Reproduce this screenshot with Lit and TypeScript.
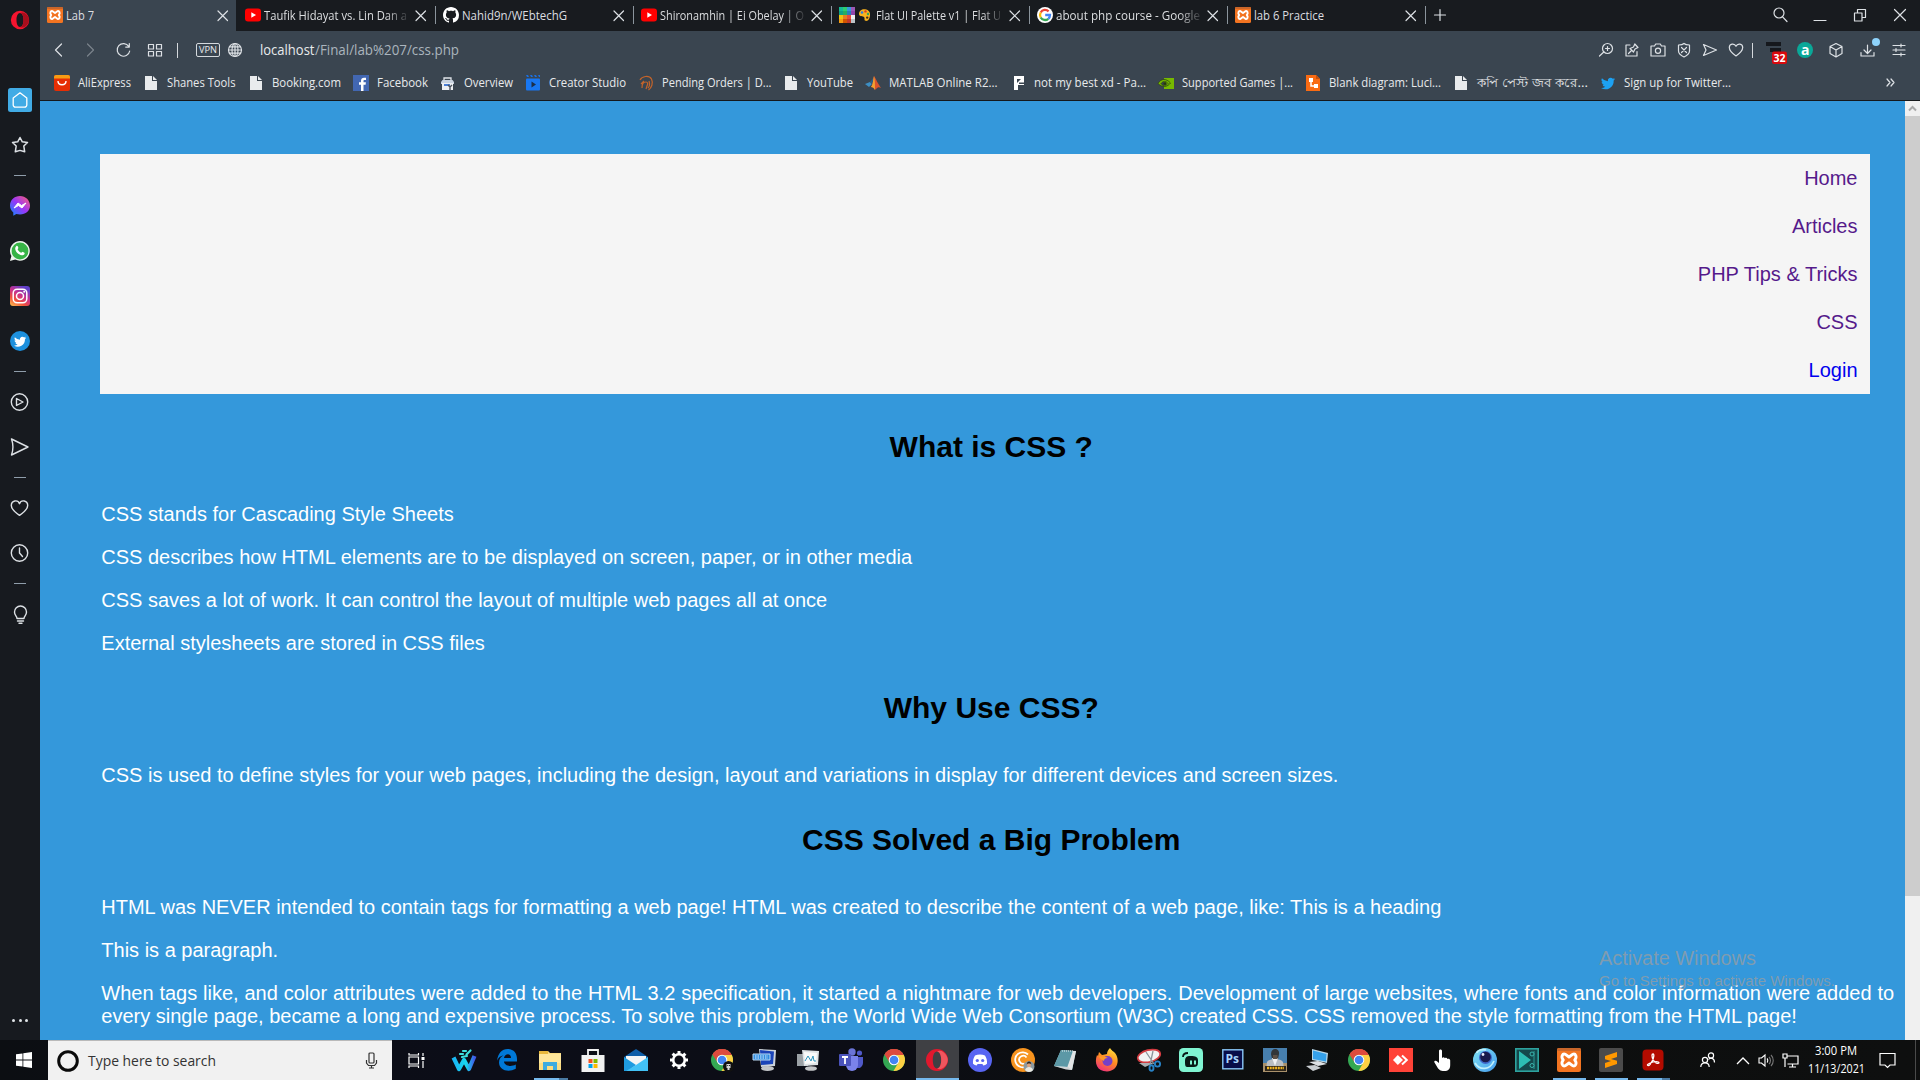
import { LitElement, html, svg, css, nothing } from "lit";
import { customElement } from "lit/decorators.js";

type Art = unknown;

/** A square icon drawn on its own grid. */
const icon = (art: Art, size = 16, grid = size, cls = "") =>
  html`<svg class="ic ${cls}" width=${size} height=${size} viewBox="0 0 ${grid} ${grid}">${art}</svg>`;

/** Single-line interface label set to an exact advance width. */
const label = (text: string, width: number, size = 12, cls = "") =>
  html`<svg class="label ${cls}" width=${width} height=${Math.round(size * 1.5)}>
    <text x="0" y=${Math.round(size * 1.1)} font-size=${size} textLength=${width} lengthAdjust="spacingAndGlyphs">${text}</text>
  </svg>`;

const xampp = svg`<rect width="16" height="16" rx="1.5" fill="#f37421"/><rect width="16" height="2" rx="1" fill="#c9662a"/>
  <path d="M5.600 4.200C3.600 3.400 2.400 6 4.200 8 2.400 10 3.600 12.600 5.600 11.800L8 10l2.400 1.800C12.400 12.600 13.600 10 11.800 8 13.600 6 12.400 3.400 10.400 4.200L8 6z" fill="none" stroke="#fff" stroke-width="1.900" stroke-linejoin="round"/>`;
const youtube = svg`<rect x="0" y="1.500" width="16" height="13" rx="3" fill="#f00"/><path d="M6.300 5.300v5.400L11 8z" fill="#fff"/>`;
const github = svg`<path fill="#fff" d="M8 0C3.580 0 0 3.580 0 8c0 3.540 2.290 6.530 5.470 7.590.4.070.55-.17.55-.38 0-.19-.01-.82-.01-1.490-2.010.37-2.530-.49-2.690-.94-.09-.23-.48-.94-.82-1.130-.28-.15-.68-.52-.01-.53.63-.01 1.080.58 1.230.82.72 1.210 1.870.87 2.330.66.070-.52.28-.87.51-1.070-1.780-.2-3.640-.89-3.640-3.950 0-.87.31-1.590.82-2.150-.08-.2-.36-1.020.080-2.120 0 0 .67-.21 2.200.82.64-.18 1.320-.27 2-.27s1.360.09 2 .27c1.530-1.040 2.200-.82 2.200-.82.44 1.100.16 1.920.080 2.120.51.56.82 1.270.82 2.150 0 3.070-1.870 3.750-3.650 3.950.29.25.54.73.54 1.480 0 1.070-.01 1.930-.01 2.200 0 .21.15.46.55.38A8.010 8.010 0 0 0 16 8c0-4.420-3.580-8-8-8z"/>`;
const paletteColors = ["#16b995", "#2ecc71", "#3498db", "#9b59b6", "#12a085", "#27ae60", "#2980b9", "#8e44ad", "#f1c40f", "#e67e22", "#e74c3c", "#ecf0f1", "#f39c12", "#d35400", "#c0392b", "#bdc3c7"];
const flatPalette = svg`${paletteColors.map((c, i) => svg`<rect x=${(i % 4) * 4} y=${Math.floor(i / 4) * 4} width="4" height="4" fill=${c}/>`)}`;
const paintPalette = svg`<path d="M1 6C1 2.500 4 .8 7 1.200c4 .5 5.400 3.300 5 6.300-.3 3-1.800 6-4.500 5.300-1.800-.5-.4-2.300-1.300-3.500C5 7.700 1 9 1 6z" fill="#f9b21d"/><circle cx="4" cy="4.500" r="1.300" fill="#2f7de0"/><circle cx="7.500" cy="3.400" r="1.200" fill="#d93b2b"/><circle cx="10" cy="6" r="1.200" fill="#3aa655"/><circle cx="9.200" cy="9.600" r="1.200" fill="#3b2a1a"/>`;
const google = svg`<circle cx="8" cy="8" r="8" fill="#fff"/><g fill="none" stroke-width="2.300"><path d="M11.600 4.400A5 5 0 0 0 3.700 5.500" stroke="#ea4335"/><path d="M3.700 5.500a5 5 0 0 0 0 5" stroke="#fbbc05"/><path d="M3.700 10.500a5 5 0 0 0 7.600 1.300" stroke="#34a853"/><path d="M11.300 11.800A5 5 0 0 0 13 8H8.200" stroke="#4285f4"/></g>`;

const doc = svg`<path d="M2 1h7v5h5v9H2z" fill="#e9ebed"/><path d="M10 1l4 4h-4z" fill="#e9ebed"/>`;
const birdPath = "M16 3.500a6 6 0 0 1-1.900.5 3.300 3.300 0 0 0 1.400-1.800 6.500 6.500 0 0 1-2.100.8 3.300 3.300 0 0 0-5.600 3A9.300 9.300 0 0 1 1.100 2.600a3.300 3.300 0 0 0 1 4.400 3.300 3.300 0 0 1-1.500-.4 3.300 3.300 0 0 0 2.600 3.200 3.300 3.300 0 0 1-1.500.1 3.300 3.300 0 0 0 3.100 2.200A6.600 6.600 0 0 1 0 13.500 9.300 9.300 0 0 0 14.400 5.200 6.600 6.600 0 0 0 16 3.500z";

const chrome = svg`<circle cx="12" cy="12" r="11" fill="#34a853"/><path d="M2.500 6.500A11 11 0 0 1 21.500 6.500L12 7z" fill="#dd4b3e"/><path d="M2.500 6.500A11 11 0 0 1 21.800 7H12a5 5 0 0 0-4.400 7.500z" fill="#dd4b3e"/><path d="M21.800 7A11 11 0 0 1 11.500 23l4.900-8.500A5 5 0 0 0 12 7z" fill="#fdd043"/><circle cx="12" cy="12" r="5.300" fill="#fff"/><circle cx="12" cy="12" r="4.300" fill="#4285f4"/>`;
const operaO = (a: string, b: string) => svg`<path fill-rule="evenodd" fill=${a} d="M12 1a11 11 0 1 0 0 22 11 11 0 0 0 0-22zm0 2.600c2.700 0 4.200 3.800 4.200 8.400s-1.500 8.400-4.200 8.400S7.800 16.600 7.800 12 9.300 3.600 12 3.600z"/><path fill=${b} d="M12 3.600c2-1.200 4.500-.9 6.500.6 5.700 4.600 5.700 11 0 15.600-2 1.500-4.500 1.800-6.500.6 2.700 0 4.200-3.800 4.200-8.400S14.700 3.600 12 3.600z"/>`;

const tabs = [
  { art: xampp, text: "Lab 7", width: 28, active: true },
  { art: youtube, text: "Taufik Hidayat vs. Lin Dan a", width: 143, fade: true },
  { art: github, text: "Nahid9n/WEbtechG", width: 105 },
  { art: youtube, text: "Shironamhin | Ei Obelay | O", width: 144, fade: true },
  { art: flatPalette, emoji: true, text: "Flat UI Palette v1 | Flat U", width: 125, fade: true },
  { art: google, text: "about php course - Google", width: 144, fade: true },
  { art: xampp, text: "lab 6 Practice", width: 70 },
];

const bookmarks: [Art, string, number][] = [
  [svg`<rect y="0" width="16" height="16" rx="2" fill="#e62e04"/><path d="M0 3.500V2a2 2 0 0 1 2-2h12a2 2 0 0 1 2 2v1.500z" fill="#f79c14"/><path d="M4 6c0 5 8 5 8 0" stroke="#fff" stroke-width="1.400" fill="none"/>`, "AliExpress", 53],
  [doc, "Shanes Tools", 68.5],
  [doc, "Booking.com", 69],
  [svg`<rect width="16" height="16" fill="#4267b2"/><path d="M8 16V9.800H6V7.300h2V5.700C8 3.700 9.200 2.700 11 2.700h2V5h-1.400c-.9 0-1.100.4-1.100 1v1.300h2.400l-.3 2.500h-2.100V16z" fill="#fff"/>`, "Facebook", 51],
  [svg`<path d="M4 3h7v3H4z" fill="none" stroke="#dfe3e8" stroke-width="1.300"/><path d="M1 7l1.500-2h10L14 7v2H1z" fill="#c9d3e0"/><rect x="2" y="8" width="11" height="7" fill="#eceff3"/><path d="M4 9h6v2H4z" fill="#4b7fd6"/><path d="M8 10l2 2v4m0-4l2-2" stroke="#4a525c" stroke-width="1.400" fill="none"/>`, "Overview", 49],
  [svg`<rect x="1" y="3.500" width="14" height="12" rx="1" fill="#1877f2"/><path d="M1 0h2l1 2H2zm4 0h2l1 2H6zm4 0h2l1 2h-2zm4 0h2v2h-1z" fill="#1b6fe0"/><path d="M6.500 6.500v6l4.500-3z" fill="#1c2f49"/>`, "Creator Studio", 77],
  [svg`<g fill="none" stroke="#c4642a" stroke-width="1.200"><path d="M2 5C4 1 11 0 13.500 4c2 4 0 9-3 11M4 13c0-4 1-6 4-6 2 0 2 2 1 4l-1 3M3 9l3-3M11 6c1 3 1 5-1 7"/></g>`, "Pending Orders | D...", 109.5],
  [doc, "YouTube", 46],
  [svg`<path d="M0 9l5-2 2 2-3 3z" fill="#3d8fc4"/><path d="M5 7l4-5-2 8z" fill="#2a5e86"/><path d="M9 1c2 3 4 8 7 12-3-2-4 0-6 2-1-2-2-3-4-3 2-2 2-7 3-11z" fill="#d9532c"/><path d="M9 1c1 4 1 8 1 14-1-2-2-3-4-3 2-2 2-7 3-11z" fill="#f0a032"/>`, "MATLAB Online R2...", 108.5],
  [svg`<path d="M4 1h10v9H8v5H4z" fill="#fff"/><path d="M7 4h4L7 8z" fill="#3a4550"/><path d="M9 7.500h5v1.500H9z" fill="#3a4550"/>`, "not my best xd - Pa...", 112],
  [svg`<rect x="6" y="3" width="10" height="11" fill="#76b900"/><path d="M0 8.500C3 3.500 8 3 12.500 8c-3 4-8 5-12.500.5zM3 8.500c2 3 5 2.500 7 0-2-3-5-2.500-7 0z" fill="#76b900" stroke="#2d4311" stroke-width=".8"/><circle cx="7" cy="8.500" r="1.500" fill="#26350f"/>`, "Supported Games |...", 111],
  [svg`<path d="M1 0h10l4 4v12H1z" fill="#f96b13"/><path d="M11 0l4 4h-4z" fill="#c9500a"/><path d="M4 3h4v4H4zM9 9h4v4H9z" fill="#fff"/><path d="M6 7v4h4" stroke="#fff" stroke-width="1.500" fill="none"/>`, "Blank diagram: Luci...", 112],
  [doc, "কপি পেস্ট জব করে...", 111],
  [svg`<path d=${birdPath} fill="#1da1f2" transform="translate(1 1) scale(.88)"/>`, "Sign up for Twitter...", 107],
];

const line = (art: Art) => svg`<g fill="none" stroke="#dde1e5" stroke-width="1.200" stroke-linejoin="round" stroke-linecap="round">${art}</g>`;

const navIcons = {
  back: line(svg`<path d="M11.500 2L5.500 8l6 6"/>`),
  forward: line(svg`<path d="M5.500 2l6 6-6 6"/>`),
  reload: line(svg`<path d="M13.800 4.500A6.300 6.300 0 1 0 14.700 9M14.300 1.500v3.600h-3.600"/>`),
  grid: line(svg`<path d="M1.500 2.500h5v4.500h-5zM9.500 2.500h5v4.500h-5zM1.500 9.500h5V14h-5zM9.500 9.500h5V14h-5z"/>`),
  globe: line(svg`<circle cx="8" cy="8" r="6.500"/><ellipse cx="8" cy="8" rx="3" ry="6.500"/><path d="M1.500 8h13M2.500 4.800h11M2.500 11.200h11M8 1.500v13"/>`),
};

const pageActions: Art[] = [
  line(svg`<circle cx="9.500" cy="6.500" r="5"/><path d="M5.800 10L1.500 14M7.500 6.500h4M9.500 4.500v4"/>`),
  line(svg`<path d="M6 3H2v11h11V9.500M4.500 11.500l3-3M6 6.500l3.500 3.500 1.500-3L14 5.500 10.800 2 9.500 5z"/>`),
  line(svg`<path d="M1 4h3.500l1.200-2h4.600l1.200 2H15v10H1z"/><circle cx="8" cy="8.800" r="2.600"/>`),
  line(svg`<path d="M2.500 3C5 3 7 2.500 8 1.500 9 2.500 11 3 13.500 3v6c0 3-2.500 4.500-5.500 6-3-1.500-5.500-3-5.500-6zM5.500 5.500l5 5M10.500 5.500l-5 5"/>`),
  line(svg`<path d="M1.500 2.500L14.500 8l-13 5.500L4 8z"/>`),
  line(svg`<path d="M8 14C3 10.500 1.300 8 1.300 5.500c0-4 5.200-4.600 6.700-1.200 1.500-3.400 6.700-2.800 6.700 1.200C14.700 8 13 10.500 8 14z"/>`),
];

const sideIcons: (Art | null)[] = [
  svg`<rect x="0" y="0" width="24" height="24" rx="2.500" fill="#41abe5"/><path d="M12 4.800l6.800 5.200v7a2.200 2.200 0 0 1-2.200 2.200H7.400A2.200 2.200 0 0 1 5.200 17v-7z" fill="none" stroke="#fff" stroke-width="1.300" stroke-linejoin="round"/>`,
  line(svg`<path d="M12 4.500l2.300 4.300 5.200.7-3.700 3.500.9 5.800-4.700-1.400-4.700 1.400.9-5.800-3.700-3.500 5.200-.7z" stroke-width="1.500"/>`),
  null,
  svg`<defs><linearGradient id="msg" x1="0" y1="1" x2="1" y2="0"><stop offset="0" stop-color="#0a8cff"/><stop offset=".5" stop-color="#9a35f8"/><stop offset="1" stop-color="#ff6370"/></linearGradient></defs><path d="M12 2C6.300 2 2 6 2 11.600c0 2.800 1.200 5.300 3.300 7v3.100l3-1.600c1.200.3 2.400.5 3.700.5 5.700 0 10-3.800 10-9S17.700 2 12 2z" fill="url(#msg)"/><path d="M6 14l4-5 3.500 2.500L18 9l-4 5-3.500-2.500z" fill="#fff" stroke="#fff"/>`,
  svg`<path d="M2 22l1.400-5A9.900 9.900 0 1 1 7.200 20.600z" fill="#eef5ee"/><circle cx="12" cy="12" r="8.400" fill="#37b446"/><path d="M8.200 7.200c1-.8 1.600-.2 2.200 1.700l-.8 1.300c.9 1.800 2 2.800 3.700 3.500l1.200-1c1.900.8 2.500 1.200 2 2.200-1.500 2.200-4.200 1.500-6.300-.1C7.800 13 6 9 8.200 7.200z" fill="#fff"/>`,
  svg`<defs><linearGradient id="ig" x1="0" y1="1" x2=".6" y2="0"><stop offset="0" stop-color="#fdc54f"/><stop offset=".35" stop-color="#f0503c"/><stop offset=".65" stop-color="#c8308f"/><stop offset="1" stop-color="#6040c8"/></linearGradient></defs><rect x="2" y="2" width="20" height="20" rx="3" fill="url(#ig)"/><g fill="none" stroke="#fff" stroke-width="1.500"><rect x="5.200" y="5.200" width="13.600" height="13.600" rx="4"/><circle cx="12" cy="12" r="3.500"/></g><circle cx="16.200" cy="7.800" r="1" fill="#fff"/>`,
  svg`<circle cx="12" cy="12" r="10" fill="#1d90dd"/><path transform="translate(6 6.200) scale(.76)" d=${birdPath} fill="#fff"/>`,
  null,
  line(svg`<g transform="translate(-.5 0)"><circle cx="12" cy="12" r="8.200" stroke-width="1.400"/><path d="M9 8.500l6.500 3.500L9 15.500z" stroke-width="1.400"/></g>`),
  line(svg`<path d="M3.500 4L20 12 3.500 20c1.800-5 1.800-11 0-16z" stroke-width="1.400"/>`),
  null,
  line(svg`<path d="M11.500 19.300C6 15.500 3.300 12.800 3.300 9.600c0-5.200 6.500-6.400 8.200-1.900 1.700-4.500 8.200-3.300 8.200 1.900 0 3.200-2.700 5.900-8.200 9.700z" stroke-width="1.400"/>`),
  line(svg`<g transform="translate(-.5 0)"><circle cx="12" cy="12" r="8.200" stroke-width="1.400"/><path d="M12 7v5l3 3.500" stroke-width="1.400"/></g>`),
  null,
  line(svg`<path d="M9 16.500c0-2.500-2.500-3-2.500-6.500a6 6 0 0 1 12 0c0 3.500-2.500 4-2.500 6.500zM9.500 19h6M11 21.300h3" stroke-width="1.400"/>`),
];

/** Taskbar pins: artwork, and how the pin's window state is shown. */
const pins: { art: Art; state?: string }[] = [
  { art: svg`<defs><linearGradient id="ww"><stop offset="0" stop-color="#18b6f5"/><stop offset=".6" stop-color="#19d8f0"/><stop offset="1" stop-color="#3f5be8"/></linearGradient></defs><path d="M1.500 9.500l5.500 11.500 5-9 5 9 5.500-13" fill="none" stroke="url(#ww)" stroke-width="4.200" stroke-linejoin="round"/><path d="M8 6l3 0M11 3l3 0M14.500 6.500l4-4M10 9l5-1" stroke="#3ee0dd" stroke-width="2.200" stroke-linecap="round"/>` },
  { art: svg`<path d="M2 13C3 5 7 1 12.500 1 19 1 22 5.500 22 11v2.500H9c.2 4 6.500 6 11.800 3v4.300C13 25 4 22 4 14.500c0-3.500 2-6 4.500-7C4.500 8 3 10.500 2 13zM9 10h7c0-5.500-6.500-4.500-7 0z" fill="#0078d7"/>` },
  { state: "split", art: svg`<path d="M1 3h9l2 2h11v17H1z" fill="#fbdc82"/><path d="M1 3h9v3H1z" fill="#e9b83c"/><path d="M1 6h22v9H1z" fill="#ffe69a"/><path d="M5 22v-8h14v8h-4v-4H9v4z" fill="#3cabe0"/>` },
  { art: svg`<path d="M7 8V2h10v6" fill="none" stroke="#f2f2f2" stroke-width="1.800"/><path d="M.5 7h23v17H.5z" fill="#f2f2f2"/><path d="M7.500 11h4v4h-4z" fill="#f25022"/><path d="M12.500 11h4v4h-4z" fill="#7fba00"/><path d="M7.500 16h4v4h-4z" fill="#00a4ef"/><path d="M12.500 16h4v4h-4z" fill="#ffb900"/>` },
  { art: svg`<path d="M0 9l12-8 12 8v14H0z" fill="#0f5ea8"/><path d="M2 8h20v12H2z" fill="#f5f5f5"/><path d="M0 9l12 8-8 6H0z" fill="#1f9be0"/><path d="M24 9v14H2l10-6z" fill="#42c1f5"/>` },
  { art: svg`<circle cx="12" cy="12" r="5.800" fill="none" stroke="#fff" stroke-width="2.600"/><g stroke="#fff" stroke-width="3">${[0, 45, 90, 135, 180, 225, 270, 315].map((a) => svg`<path d="M12 3v3" transform="rotate(${a} 12 12)"/>`)}</g>` },
  { art: svg`${chrome}<circle cx="18.500" cy="18.500" r="5.500" fill="#111"/><path d="M16.500 16h4v4h-1v2h-2v-2h-1z" fill="#d8d8d8"/><path d="M17.300 17.500h.9M19 17.500h.9" stroke="#111"/>` },
  { art: svg`<path d="M6 1l17 1-1 16-14 1z" fill="#cdd3da"/><path d="M7 2l14 1.500-1 12.500-12 1z" fill="#1b44b8"/><path d="M0 6h17v6H0z" fill="#2f8ce0" stroke="#bcd9f3"/><path d="M2 8h13M2 10h13" stroke="#e5f2ff" stroke-dasharray="1.500 1"/><ellipse cx="14.500" cy="20.500" rx="6.500" ry="2.500" fill="#c3c5c8"/>` },
  { art: svg`<path d="M1 6h11v12H1z" fill="#9ba1a6"/><path d="M6 2l17 1-1 14-14 1z" fill="#dfe3e6"/><path d="M8 4l13 1-1 10-11 1z" fill="#fafafa"/><path d="M9 13l3-5 3 5 2-5 1 5h2" fill="none" stroke="#2c94bd"/><ellipse cx="15" cy="20.500" rx="6" ry="2.300" fill="#c3c5c8"/>` },
  { art: svg`<circle cx="13" cy="4" r="3.700" fill="#6b74d6"/><circle cx="20.500" cy="5" r="2.600" fill="#5059c9"/><path d="M16 9h8v6a5 5 0 0 1-6 5z" fill="#5059c9"/><path d="M7 8h12v9a6 6 0 0 1-12 0z" fill="#7b83eb"/><rect x="0" y="6" width="12" height="12" rx="1" fill="#4b53bc"/><path d="M3 9h6M6 9v7" stroke="#fff" stroke-width="1.800"/>` },
  { art: chrome },
  { art: operaO("#e0182d", "#f0565e"), state: "active" },
  { art: svg`<circle cx="12" cy="12" r="12" fill="#5865f2"/><path d="M7 7.500c3-1.300 7-1.300 10 0 1.500 2.500 2.300 5 2 8.300-1.200 1-2.400 1.500-3.700 1.700l-.9-1.500H9.600l-.9 1.500C7.400 17.300 6.200 16.800 5 15.800c-.3-3.300.5-5.800 2-8.300z" fill="#fff"/><circle cx="9.300" cy="12.500" r="1.600" fill="#5865f2"/><circle cx="14.700" cy="12.500" r="1.600" fill="#5865f2"/>` },
  { art: svg`<circle cx="12" cy="12" r="12" fill="#f7931e"/><path d="M17 6.500A7.500 7.500 0 1 0 15 18.500M15.500 9.500a4 4 0 1 0-2 6" fill="none" stroke="#fff" stroke-width="1.800"/><circle cx="18" cy="18.500" r="5.500" fill="#8d9aa0"/><circle cx="18" cy="17" r="2.200" fill="#d6a383"/><path d="M15.800 16.500c0-4 4.500-4 4.500 0l-1-1h-2.500z" fill="#2b211b"/><path d="M14 22c1-4 7-4 8 0-2 2.500-6 2.500-8 0z" fill="#e9e9e2"/>` },
  { art: svg`<path d="M8 2l15 1-4 19L1 18z" fill="#9ed0d8"/><path d="M8 2l12 1-5 16L1 18z" fill="#5c98a6"/><path d="M20 3l3 0-4 19-5-2z" fill="#e2e4e5"/><path d="M1 18l14 1 4 3-6-.5z" fill="#cfd2d4"/><path d="M9 3h12" stroke="#e9f2f3" stroke-dasharray="1 1"/>` },
  { art: svg`<defs><linearGradient id="fx" x1=".8" y1="0" x2=".3" y2="1"><stop offset="0" stop-color="#ffe13c"/><stop offset=".5" stop-color="#ff8a22"/><stop offset="1" stop-color="#f0317b"/></linearGradient></defs><path d="M15 0c2 3 3 3 5 5 5 6 3.500 18-8 18.500C2 23.500-1 15 2 7l1 1 1-4 3 3c2-.5 4-.5 5-1 0-2 1-4 3-6z" fill="url(#fx)"/><circle cx="12.500" cy="13" r="5" fill="#7540c8"/><path d="M4 8c4 1 6 0 9 2-3 0-4 1-4 3-2-1-5-3-5-5z" fill="#ff9a28"/>` },
  { art: svg`<ellipse cx="12" cy="8" rx="11.500" ry="6" transform="rotate(-14 12 8)" fill="#f2f3f3" stroke="#d23b40" stroke-width="1.700"/><path d="M2 15l15 0-9 4z" fill="#a9adb1"/><path d="M9 4l8 12M16 3l-3 14" stroke="#8b959c" stroke-width="1.300"/><g fill="none" stroke="#2882c6" stroke-width="1.900"><circle cx="20.500" cy="16" r="2.600"/><ellipse cx="14.500" cy="20" rx="2" ry="2.800"/></g>` },
  { art: svg`<rect width="24" height="24" rx="4.500" fill="#80f5d2"/><path d="M4 9c0-3 2-4 5-4" fill="none" stroke="#091a17" stroke-width="1.800"/><path d="M6 13c0-4 2-5 5-5s8 0 8 4v3c0 3-2 4-4 4H8c-2 0-2-3-2-6z" fill="#091a17"/><path d="M12 12.500v4M16 12.500v4" stroke="#80f5d2" stroke-width="2"/>` },
  { art: svg`<rect x="1.800" y="1.800" width="20" height="19" fill="#080d49" stroke="#8bc7f8" stroke-width="1.400"/><text x="4.500" y="15" class="ps">Ps</text>` },
  { art: svg`<rect width="24" height="24" fill="#477fae"/><path d="M0 15h24v9H0z" fill="#a9916b"/><path d="M8 6c0-7 9-6 8 0l-1 5H9z" fill="#31363a"/><path d="M4 14c2-4 14-4 16 0l1 7H3z" fill="#b9bec2"/><path d="M9 10l3 8 3-8z" fill="#f0f1f2"/><path d="M10 7h4.500v4H10z" fill="#5c5046"/><path d="M2 18h21v5H2z" fill="#2b251b"/><path d="M4 20h17" stroke="#f1b41f" stroke-width="2.500" stroke-dasharray="2 .7"/>` },
  { art: svg`<path d="M7 1l16 4-1 10L7 12z" fill="#b9d7e7"/><path d="M8 2.500l13.500 3.500L21 13.500 8 11z" fill="#35a2ec"/><path d="M4 14l9-1 9 3-9 2z" fill="#dde1e4"/><path d="M1 18l9-1 6 3-8 3z" fill="#c9ced2"/>` },
  { art: chrome },
  { art: svg`<rect width="24" height="24" fill="#ff4338"/><path d="M8.800 7l5.200 5-5.200 5L4 12z" fill="#fff"/><path d="M13 7.500l4.800 4.500L13 16.500" fill="none" stroke="#fff" stroke-width="2"/>` },
  { art: svg`<path d="M8 3c0-2 3-2 3 0v7c1-1 2.500-.8 2.800.3 1-.8 2.300-.5 2.600.6 1.300-.6 2.600 0 2.800 1.300V17c0 4-2 6-6 6-4 0-5.500-1.500-7-4l-3-5c0-1.500 2-1.800 3-.6L8 15z" fill="#fff"/>` },
  { art: svg`<defs><linearGradient id="gl" x1="0" y1="0" x2="1" y2="1"><stop offset="0" stop-color="#7fe2f3"/><stop offset="1" stop-color="#459bec"/></linearGradient></defs><circle cx="12" cy="12" r="12" fill="url(#gl)"/><path d="M2 15c5 8 15 7 19-2M4 5c0-3 6-4 9-3" fill="none" stroke="#bff0fb" stroke-width="1.800"/><circle cx="12.500" cy="9.500" r="6.500" fill="#3e67c8"/><circle cx="12.500" cy="9" r="5.300" fill="#191a4b"/><circle cx="10" cy="6.500" r="1.400" fill="#e9edfb"/>` },
  { art: svg`<rect x=".8" y=".8" width="22.400" height="22.400" fill="#14494c" stroke="#2da39f" stroke-width="1.600"/><path d="M4 3v18l12-9z" fill="#2dbdb3"/><path d="M19 3v18" stroke="#227f7e" stroke-width="1.500"/><g fill="#14494c" stroke="#3bb5ae"><circle cx="17" cy="6" r="2"/><circle cx="17" cy="17.500" r="2"/></g>` },
  { art: svg`<g transform="scale(1.500)">${xampp}</g>`, state: "open" },
  { art: svg`<rect width="24" height="24" rx="2" fill="#4b4b4b"/><path d="M6 8l12-4v5l-6 2 6 1.800V16L6 20v-5l6-2-6-1.800z" fill="#ff9800"/>`, state: "open" },
  { art: svg`<rect x="1.500" y="1.500" width="21" height="21" rx="4" fill="#b30b00"/><path d="M12 6c1.500 0 .8 4-.8 7-1.200 2.500-3 5-4.400 4.500-1.800-1 4-3.800 8.500-3.800 3.800 0 3 2 .7 1.700-2.500-.4-5.200-5.200-5-8.200 0-.8.500-1.200 1-1.200z" fill="none" stroke="#fff" stroke-width="1.300"/>`, state: "split" },
];

const topics = [
  {
    title: "What is CSS ?",
    lines: [
      "CSS stands for Cascading Style Sheets",
      "CSS describes how HTML elements are to be displayed on screen, paper, or in other media",
      "CSS saves a lot of work. It can control the layout of multiple web pages all at once",
      "External stylesheets are stored in CSS files",
    ],
  },
  {
    title: "Why Use CSS?",
    lines: ["CSS is used to define styles for your web pages, including the design, layout and variations in display for different devices and screen sizes."],
  },
  {
    title: "CSS Solved a Big Problem",
    lines: [
      "HTML was NEVER intended to contain tags for formatting a web page! HTML was created to describe the content of a web page, like: This is a heading",
      "This is a paragraph.",
      html`<span class="airy">When tags like, and color attributes were added to the HTML 3.2 specification, it started a nightmare for web developers. Development of large websites, where fonts and color information were added to</span><br />every single page, became a long and expensive process. To solve this problem, the World Wide Web Consortium (W3C) created CSS. CSS removed the style formatting from the HTML page!`,
    ],
  },
];

@customElement("app-root")
export class AppRoot extends LitElement {
  static styles = css`
    :host { display: block; width: 1920px; height: 1080px; overflow: hidden; font-family: "Open Sans", "Noto Sans", sans-serif; }
    * { box-sizing: border-box; }
    .ic { display: block; flex: none; overflow: visible; }
    .label { display: block; flex: none; overflow: visible; fill: #e8eaec; }
    .desktop { display: grid; grid-template: 1040px 40px / 40px 1880px; height: 1080px; }

    .side { background: #171a1f; display: flex; flex-direction: column; align-items: center; padding-bottom: 8px; }
    .logo { height: 77.5px; padding-top: 10px; }
    .slot { height: 45px; display: flex; align-items: center; }
    .rule { height: 16px; display: flex; align-items: center; }
    .rule::before { content: ""; width: 12px; height: 1px; background: #8f9daa; }
    .more { margin-top: auto; height: 24px; display: flex; align-items: center; gap: 3.500px; }
    .more i { width: 3px; height: 3px; border-radius: 50%; background: #e1e5e8; }

    .win { display: grid; grid-template-rows: 31px 38px 32px 939px; min-width: 0; }
    .tabs { background: #181b1f; display: flex; }
    .tab { width: 198px; display: flex; align-items: center; padding: 0 7px 1px 7px; gap: 3px; border-right: 1px solid #83898f; border-image: linear-gradient(transparent 7px, #8b949c 7px 23px, transparent 23px) 1; }
    .tab.active { width: 196px; margin-right: 2px; background: #3a4550; border: 0; padding-right: 6px; }
    .tab .x { margin-left: auto; }
    .tab .label { fill: #dcdee0; margin-top: 1px; }
    .tab.fade .label { -webkit-mask-image: linear-gradient(90deg, #000 85%, rgba(0,0,0,.15)); mask-image: linear-gradient(90deg, #000 85%, rgba(0,0,0,.15)); }
    .plus { display: flex; align-items: center; padding: 0 0 2px 5.500px; }
    .winctl { margin-left: auto; display: flex; align-items: center; gap: 24px; padding: 0 12px 1px 0; }

    .addr { background: #3a4550; display: flex; align-items: center; padding-left: 10px; }
    .addr .nav { display: flex; gap: 16.400px; }
    .dim { opacity: .4; }
    .vr { width: 1px; height: 15px; background: #d5d9dd; }
    .addr .nav + .vr { margin-left: 14px; }
    .vpn { margin: 0 7px 0 18px; width: 24px; height: 14px; border: 1px solid #d5d9dd; border-radius: 2px; display: flex; align-items: center; justify-content: center; }
    .url { display: flex; margin-left: 17px; }
    .url .path { fill: #abb5be; }
    .acts { margin-left: auto; display: flex; gap: 10px; }
    .acts + .vr { margin: 0 13px 0 8px; }
    .exts { display: flex; align-items: center; gap: 15px; padding-right: 13.500px; }
    .badge-ext { margin-right: -6.500px; }
    .exttext { font: bold 10px "Open Sans", sans-serif; fill: #fff; }
    .exta { font: bold 14px "Open Sans", sans-serif; fill: #fff; }

    .marks { background: #3a4550; border-bottom: 1px solid #15181b; display: flex; align-items: center; gap: 12px; padding: 0 25px 4px 14px; }
    .mark { display: flex; align-items: center; gap: 8px; }
    .marks > .chev { margin-left: auto; }

    .view { background: #3498db; display: grid; grid-template-columns: 1865px 15px; position: relative; overflow: hidden; font-family: "Liberation Sans", Arial, sans-serif; font-size: 20px; line-height: 23px; }
    .page { padding: 53px 0 0 60px; min-width: 0; }
    .menu { margin: 0 0 36px; padding: 0; list-style: none; width: 1770px; background: #f5f5f5; }
    .menu li { height: 48px; display: flex; align-items: center; justify-content: flex-end; padding-right: 12.500px; color: #551a8b; }
    .menu li:last-child { color: #0000ee; }
    h2 { width: 1782.500px; margin: 0 0 39px; text-align: center; font-size: 30px; line-height: 34px; color: #000; }
    p { margin: 0 0 20px 1.300px; color: #fff; white-space: nowrap; }
    .airy { word-spacing: .3px; }
    .topic { margin-bottom: 36px; }
    .topic p:last-child { margin-bottom: 0; }
    .bar { background: #f0f0f0; display: flex; flex-direction: column; justify-content: space-between; }
    .thumb { height: 779.500px; background: #cdcdcd; margin-bottom: auto; }
    .wm { position: absolute; left: 1559px; top: 842px; display: flex; flex-direction: column; }
    .wm .label { fill: rgba(158, 158, 158, .72); }
    .wm .label + .label { margin-top: -4px; }

    .task { grid-column: 1 / 3; background: linear-gradient(90deg, #0c0e12, #0c0d18 25%, #0c0d15 45%, #0c0e0e 60%, #0e0f0f); display: flex; align-items: center; }
    .start { width: 48px; display: flex; justify-content: center; }
    .find { width: 344px; height: 40px; background: #f1f1f1; border-top: 1px solid #b9b9b9; display: flex; align-items: center; padding: 0 12px 0 8px; gap: 8px; }
    .find .label { fill: #333; }
    .find .mic { margin-left: auto; }
    .view-btn { width: 50.500px; padding-left: 15.500px; }
    .pin { width: 43px; height: 40px; flex: none; display: flex; justify-content: center; align-items: center; position: relative; }
    .pin.narrow { width: 42px; }
    .pin.active { background: #3f4044; }
    .pin.active::after, .pin.open::after, .pin.split::after { content: ""; position: absolute; bottom: 0; height: 2px; left: 5px; right: 4px; background: #76b9ed; }
    .pin.active::after { left: 0; right: 0; }
    .pin.split::after { background: linear-gradient(90deg, #76b9ed 25px, #4a7aa3 25px); }
    .ps { font: bold 12px "Open Sans", sans-serif; fill: #a6d4fb; }
    .tray { display: flex; align-items: center; margin-left: auto; }
    .clock { display: flex; flex-direction: column; align-items: center; width: 58px; margin: 0 14px 0 8px; }
    .tray .label { fill: #fff; }
    .edge { width: 1px; height: 40px; background: #4a4a4a; margin: 0 4px 0 19px; }
    .people { margin-right: 20px; }
    .up { margin-right: 9px; }
    .sound { margin-right: 7.500px; }
  `;

  private tabBar() {
    const cross = line(svg`<path d="M3 3l9.500 9.500M12.500 3L3 12.500"/>`);
    return html`<div class="tabs">
      ${tabs.map(
        (t) => html`<div class="tab ${t.active ? "active" : ""} ${t.fade ? "fade" : ""}">
          ${icon(t.art)} ${t.emoji ? icon(paintPalette, 15) : nothing} ${label(t.text, t.width)}
          ${icon(cross, 15, 15, "x")}
        </div>`
      )}
      <div class="plus">${icon(line(svg`<path d="M8 2.500v11M2.500 8h11"/>`))}</div>
      <div class="winctl">
        ${icon(line(svg`<circle cx="7" cy="6" r="5"/><path d="M10.600 9.800L15 14.500"/>`))}
        ${icon(line(svg`<path d="M2 13.500h12"/>`))}
        ${icon(line(svg`<path d="M2.500 6h7.500v8H2.500zM5.500 6V2.500h8v8H10"/>`))}
        ${icon(line(svg`<path d="M2.500 2.500l11 11M13.500 2.500l-11 11"/>`))}
      </div>
    </div>`;
  }

  private addressBar() {
    return html`<div class="addr">
      <div class="nav">
        ${icon(navIcons.back)} ${icon(navIcons.forward, 16, 16, "dim")} ${icon(navIcons.reload)} ${icon(navIcons.grid)}
      </div>
      <span class="vr"></span>
      <span class="vpn">${label("VPN", 18, 9)}</span>
      ${icon(navIcons.globe)}
      <div class="url">${label("localhost", 54.5, 14)}${label("/Final/lab%207/css.php", 144, 14, "path")}</div>
      <div class="acts">${pageActions.map((a) => icon(a))}</div>
      <span class="vr"></span>
      <div class="exts">
        <svg class="ic badge-ext" width="22" height="26" viewBox="0 0 22 26">
          <path d="M0 5h15v4H0zM4 11h11v4H4z" fill="#15181d" />
          <rect x="6" y="14.500" width="15" height="12.500" rx="2" fill="#d9090d" />
          <text x="7.500" y="24.500" class="exttext" textLength="12" lengthAdjust="spacingAndGlyphs">32</text>
        </svg>
        ${icon(svg`<circle cx="8" cy="8" r="8" fill="#0aa898"/><text x="4" y="12.700" class="exta">a</text>`)}
        ${icon(line(svg`<path d="M8 1.500l6 3v7l-6 3.500-6-3.500v-7zM2 4.500L8 8l6-3.500M8 8v7"/>`))}
        ${icon(svg`${line(svg`<path d="M8.500 3v8M5 8l3.500 3.500L12 8M2 10.500V14h13v-3.500"/>`)}<circle cx="17" cy="0" r="4" fill="#8ed3fb"/>`, 17)}
        ${icon(line(svg`<path d="M2 3.500h12M2 8h12M2 12.500h12M10 2v3M5 6.500v3M10 11v3"/>`))}
      </div>
    </div>`;
  }

  render() {
    return html`<div class="desktop">
      <div class="side">
        <div class="logo">${icon(operaO("#f5142f", "#a70e1c"), 20, 24)}</div>
        ${sideIcons.map((a) => (a ? html`<div class="slot">${icon(a, 24)}</div>` : html`<div class="rule"></div>`))}
        <div class="more"><i></i><i></i><i></i></div>
      </div>

      <div class="win">
        ${this.tabBar()} ${this.addressBar()}
        <div class="marks">
          ${bookmarks.map(([art, text, w]) => html`<div class="mark">${icon(art)}${label(text, w)}</div>`)}
          <div class="chev">${icon(line(svg`<path d="M1 1l3 3.500L1 8M5 1l3 3.500L5 8"/>`), 9)}</div>
        </div>
        <div class="view">
          <div class="page">
            <ul class="menu">
              ${["Home", "Articles", "PHP Tips & Tricks", "CSS", "Login"].map((m) => html`<li>${m}</li>`)}
            </ul>
            ${topics.map((t) => html`<section class="topic"><h2>${t.title}</h2>${t.lines.map((l) => html`<p>${l}</p>`)}</section>`)}
          </div>
          <div class="bar">
            ${icon(svg`<path d="M4 9.500L7.500 6 11 9.500" fill="none" stroke="#a9a9a9" stroke-width="2"/>`, 15)}
            <div class="thumb"></div>
            ${icon(svg`<path d="M4 6L7.500 9.500 11 6" fill="none" stroke="#555" stroke-width="2"/>`, 15)}
          </div>
          <div class="wm">${label("Activate Windows", 157, 20)}${label("Go to Settings to activate Windows.", 236, 15)}</div>
        </div>
      </div>

      <div class="task">
        <div class="start">${icon(svg`<path d="M0 2.300L6.500 1.400V7.600H0zM7.300 1.300L16 0v7.600H7.300zM0 8.400h6.500v6.200L0 13.700zM7.300 8.400H16V16l-8.700-1.300z" fill="#fff"/>`)}</div>
        <div class="find">
          ${icon(svg`<circle cx="12" cy="12" r="9.300" fill="none" stroke="#0a0a0a" stroke-width="3"/>`, 24)}
          ${label("Type here to search", 128, 15)}
          <div class="mic">${icon(svg`<g fill="none" stroke="#333" stroke-width="1.200"><rect x="6" y="1" width="5" height="10" rx="1"/><path d="M3.500 8v3l2 2.500h6l2-2.500V8M8.500 13.500V16M6 16h5"/></g>`, 17)}</div>
        </div>
        <div class="view-btn">${icon(svg`<g fill="none" stroke="#fff" stroke-width="1.200"><path d="M1 5h9.500v7H1zM1 1v2h9.500V1M1 16v-2h9.500v2M15 1v3M15 9v7"/></g><path d="M13.500 5h3v3h-3z" fill="#fff"/>`, 17)}</div>
        ${pins.map((p, i) => html`<div class="pin ${p.state ?? ""} ${i > 12 ? "narrow" : ""}">${icon(p.art, 24)}</div>`)}
        <div class="tray">
          ${icon(svg`<g fill="none" stroke="#fff" stroke-width="1.200"><circle cx="5" cy="8" r="2.600"/><path d="M.8 15c0-5.500 8.400-5.500 8.400 0"/><circle cx="11" cy="3.500" r="2.600"/><path d="M8.500 7.500c2-2.500 6-1.500 6 3"/></g>`, 16, 16, "people")}
          ${icon(svg`<path d="M1 10l6-6 6 6" fill="none" stroke="#fff" stroke-width="1.300"/>`, 13, 13, "up")}
          ${icon(svg`<g fill="none" stroke="#fff" stroke-width="1.100"><path d="M1 6h2.500L7 3v11l-3.500-3H1z"/><path d="M9 6.500c1 1 1 3 0 4"/><path d="M11 5c2 2 2 5 0 7M13 3c3 3 3 8 0 11" stroke="#777"/></g>`, 17, 17, "sound")}
          ${icon(svg`<g fill="none" stroke="#fff" stroke-width="1.200"><path d="M5.500 4H16v8H5.500M10.500 12v3M7 15h7M1 2h4v4H1zM3 6v9"/></g>`, 17)}
          <div class="clock">${label("3:00 PM", 42, 12)}${label("11/13/2021", 57, 12)}</div>
          ${icon(svg`<path d="M1 1.500h15V13h-5l-2.500 2.500L6 13H1z" fill="none" stroke="#fff" stroke-width="1.200"/>`, 17)}
          <div class="edge"></div>
        </div>
      </div>
    </div>`;
  }
}
